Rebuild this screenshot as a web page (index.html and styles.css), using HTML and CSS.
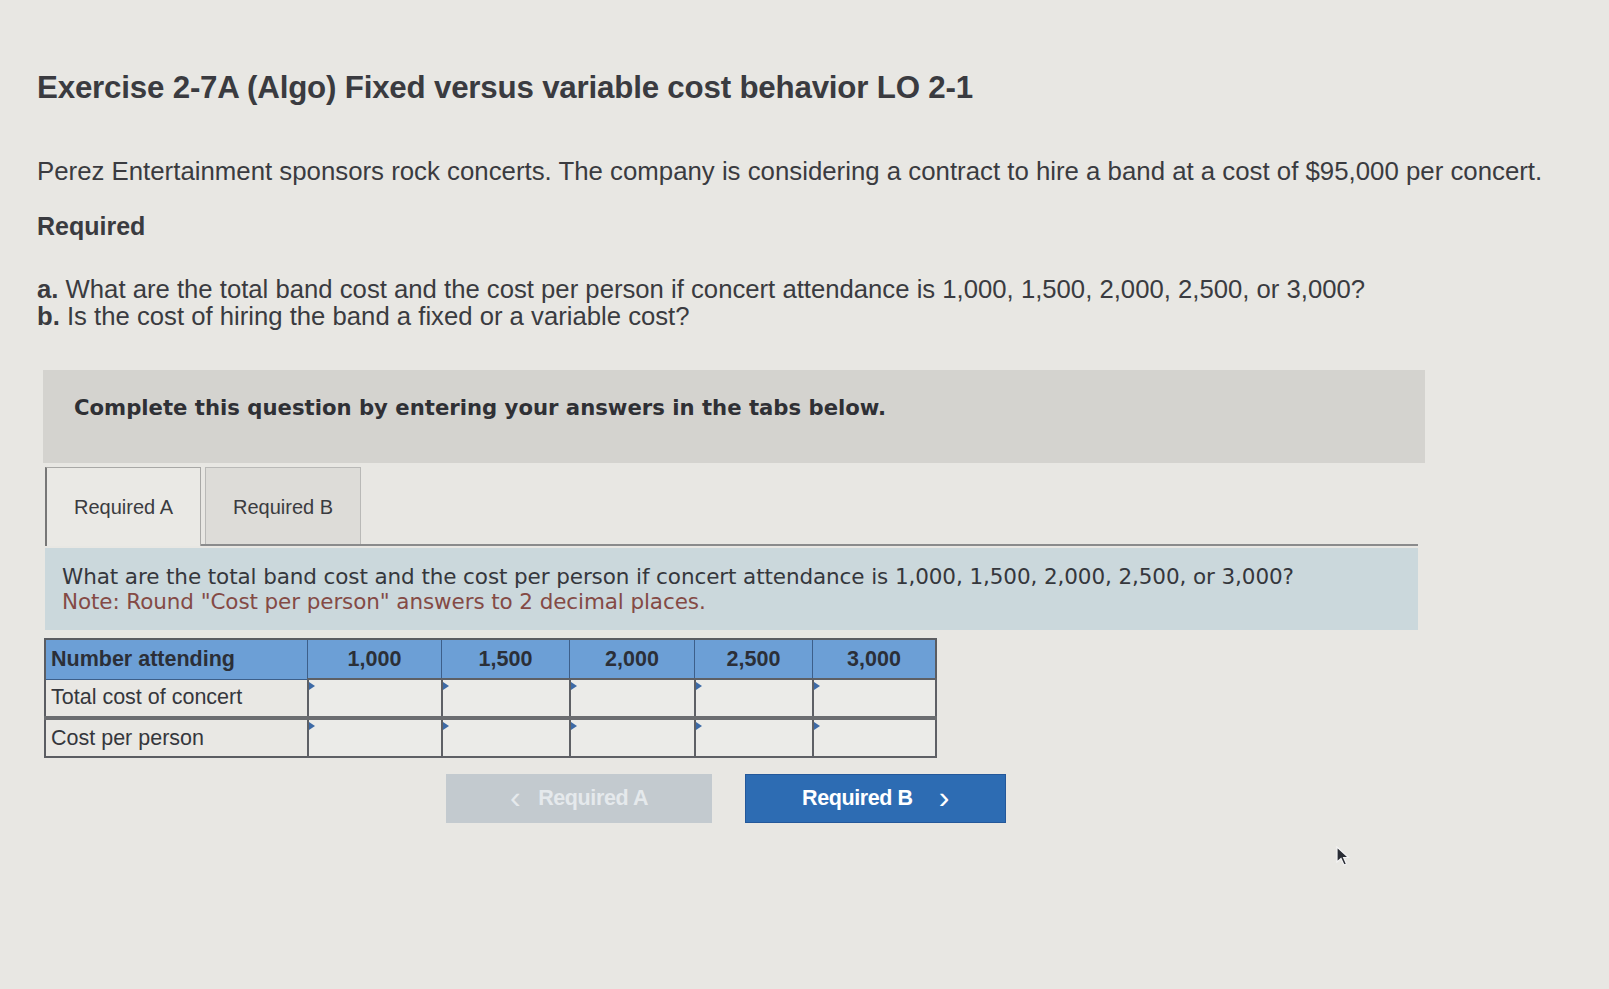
FILE: index.html
```html
<!DOCTYPE html>
<html>
<head>
<meta charset="utf-8">
<link rel="stylesheet" href="styles.css">
</head>
<body>
<div class="page">
  <h1 class="title">Exercise 2-7A (Algo) Fixed versus variable cost behavior LO 2-1</h1>
  <p class="intro">Perez Entertainment sponsors rock concerts. The company is considering a contract to hire a band at a cost of $95,000 per concert.</p>
  <div class="req-head">Required</div>
  <div class="req-list">
    <div><b>a.</b> What are the total band cost and the cost per person if concert attendance is 1,000, 1,500, 2,000, 2,500, or 3,000?</div>
    <div><b>b.</b> Is the cost of hiring the band a fixed or a variable cost?</div>
  </div>
  <div class="instruct">Complete this question by entering your answers in the tabs below.</div>
  <div class="tabs">
    <div class="tab active">Required A</div>
    <div class="tab">Required B</div>
  </div>
  <div class="question">
    <div>What are the total band cost and the cost per person if concert attendance is 1,000, 1,500, 2,000, 2,500, or 3,000?</div>
    <div class="note">Note: Round "Cost per person" answers to 2 decimal places.</div>
  </div>
  <table class="grid">
    <thead>
      <tr><th class="lbl">Number attending</th><th class="c1">1,000</th><th class="c2">1,500</th><th class="c3">2,000</th><th class="c4">2,500</th><th class="c5">3,000</th></tr>
    </thead>
    <tbody>
      <tr><td class="lbl">Total cost of concert</td><td class="in"></td><td class="in"></td><td class="in"></td><td class="in"></td><td class="in"></td></tr>
      <tr><td class="lbl">Cost per person</td><td class="in"></td><td class="in"></td><td class="in"></td><td class="in"></td><td class="in"></td></tr>
    </tbody>
  </table>
  <div class="nav">
    <div class="btn prev"><span class="chev">&lsaquo;</span> Required A</div>
    <div class="btn next">Required B <span class="chev">&rsaquo;</span></div>
  </div>
</div>
<div class="cursor">
  <svg width="16" height="22" viewBox="0 0 16 22"><path d="M1 1 L1 16 L5 12.5 L8 19 L10.5 18 L7.6 11.5 L12.5 11.5 Z" fill="#2a2d35" stroke="#f4f4f4" stroke-width="1.2"/></svg>
</div>
</body>
</html>
```

FILE: styles.css
```css
html, body {
  margin: 0;
  padding: 0;
}
body {
  background: #e8e7e3;
  width: 1609px;
  height: 989px;
  overflow: hidden;
  position: relative;
  font-family: "Liberation Sans", Arial, sans-serif;
  color: #34353a;
}
.page {
  padding: 70px 0 0 37px;
}
.title {
  margin: 0;
  font-size: 31.3px;
  line-height: 36px;
  font-weight: bold;
  color: #3a3b40;
  letter-spacing: -0.2px;
}
.intro {
  margin: 50px 0 0 0;
  font-size: 25.8px;
  line-height: 30px;
  color: #3a3b40;
}
.req-head {
  margin-top: 25px;
  font-size: 25px;
  line-height: 30px;
  font-weight: bold;
  color: #3a3b40;
}
.req-list {
  margin-top: 35px;
  font-size: 25.7px;
  line-height: 27px;
  color: #3a3b40;
}
.instruct {
  margin: 40px 0 0 6px;
  width: 1382px;
  height: 93px;
  box-sizing: border-box;
  padding: 25px 0 0 31px;
  background: #d4d3cf;
  font-family: "DejaVu Sans", Verdana, sans-serif;
  font-weight: bold;
  font-size: 21.2px;
  line-height: 26px;
  color: #2f3035;
}
.tabs {
  margin: 4px 0 0 8px;
  display: flex;
  gap: 4px;
  width: 1373px;
  border-bottom: 2px solid #8a8b8c;
  height: 77px;
}
.tab {
  width: 156px;
  box-sizing: border-box;
  border: 1px solid #b9b9b7;
  border-bottom: none;
  padding-top: 27px;
  text-align: center;
  font-size: 20px;
  line-height: 24px;
  color: #3a3b40;
  background: #dddcd8;
}
.tab.active {
  background: #eae9e5;
  border-color: #a8a8a6;
  border-left: 2px solid #777;
  height: 79px;
}
.question {
  margin: 2px 0 0 8px;
  width: 1373px;
  height: 82px;
  box-sizing: border-box;
  padding: 16px 0 0 17px;
  background: #cbd8dc;
  font-family: "DejaVu Sans", Verdana, sans-serif;
  font-size: 21.5px;
  line-height: 25px;
  color: #35373c;
  letter-spacing: -0.1px;
}
.note {
  color: #844a45;
}
.grid {
  margin: 8px 0 0 7px;
  border-collapse: collapse;
  border: 2px solid #5b5d62;
  font-size: 21.5px;
  color: #35373c;
}
.grid th {
  background: #6c9fd6;
  height: 38px;
  padding: 0;
  font-weight: bold;
  border: 1px solid #3d5f8a;
  text-align: center;
  color: #2b2f38;
}
.grid th.lbl {
  text-align: left;
  padding-left: 5px;
  width: 256px;
}
.grid th.c1 { width: 133px; }
.grid th.c2 { width: 127px; }
.grid th.c3 { width: 124px; }
.grid th.c4 { width: 117px; }
.grid th.c5 { width: 122px; }
.grid td {
  height: 36px;
  padding: 0;
  border: 2px solid #5e6065;
  position: relative;
}
.grid td.lbl {
  padding-left: 5px;
  border: 1px solid #8a8b8d;
  border-left: 2px solid #5b5d62;
  background: #e9e8e4;
}
.grid td.in {
  background: #ebebe8;
}
.grid td.in::before {
  content: "";
  position: absolute;
  left: 0;
  top: 2px;
  border-left: 6px solid #3d6aa6;
  border-top: 4px solid transparent;
  border-bottom: 4px solid transparent;
}
.grid tbody tr:first-child td {
  border-bottom: 4px solid #6b6d70;
}
.nav {
  display: flex;
  gap: 33px;
  margin: 16px 0 0 409px;
}
.btn {
  height: 49px;
  box-sizing: border-box;
  display: flex;
  align-items: center;
  justify-content: center;
  font-weight: bold;
  font-size: 21.5px;
  letter-spacing: -0.4px;
}
.btn.prev {
  width: 266px;
  background: #c3cacf;
  color: #e5e9ec;
}
.btn.next {
  width: 261px;
  background: #2d6cb3;
  color: #ffffff;
  border: 1px solid #24589a;
}
.chev {
  font-size: 32px;
  font-weight: normal;
  line-height: 20px;
  position: relative;
  top: -2px;
}
.btn.next .chev {
  margin-left: 26px;
}
.btn.prev .chev {
  margin-right: 18px;
}
.cursor {
  position: absolute;
  left: 1336px;
  top: 846px;
}
```
